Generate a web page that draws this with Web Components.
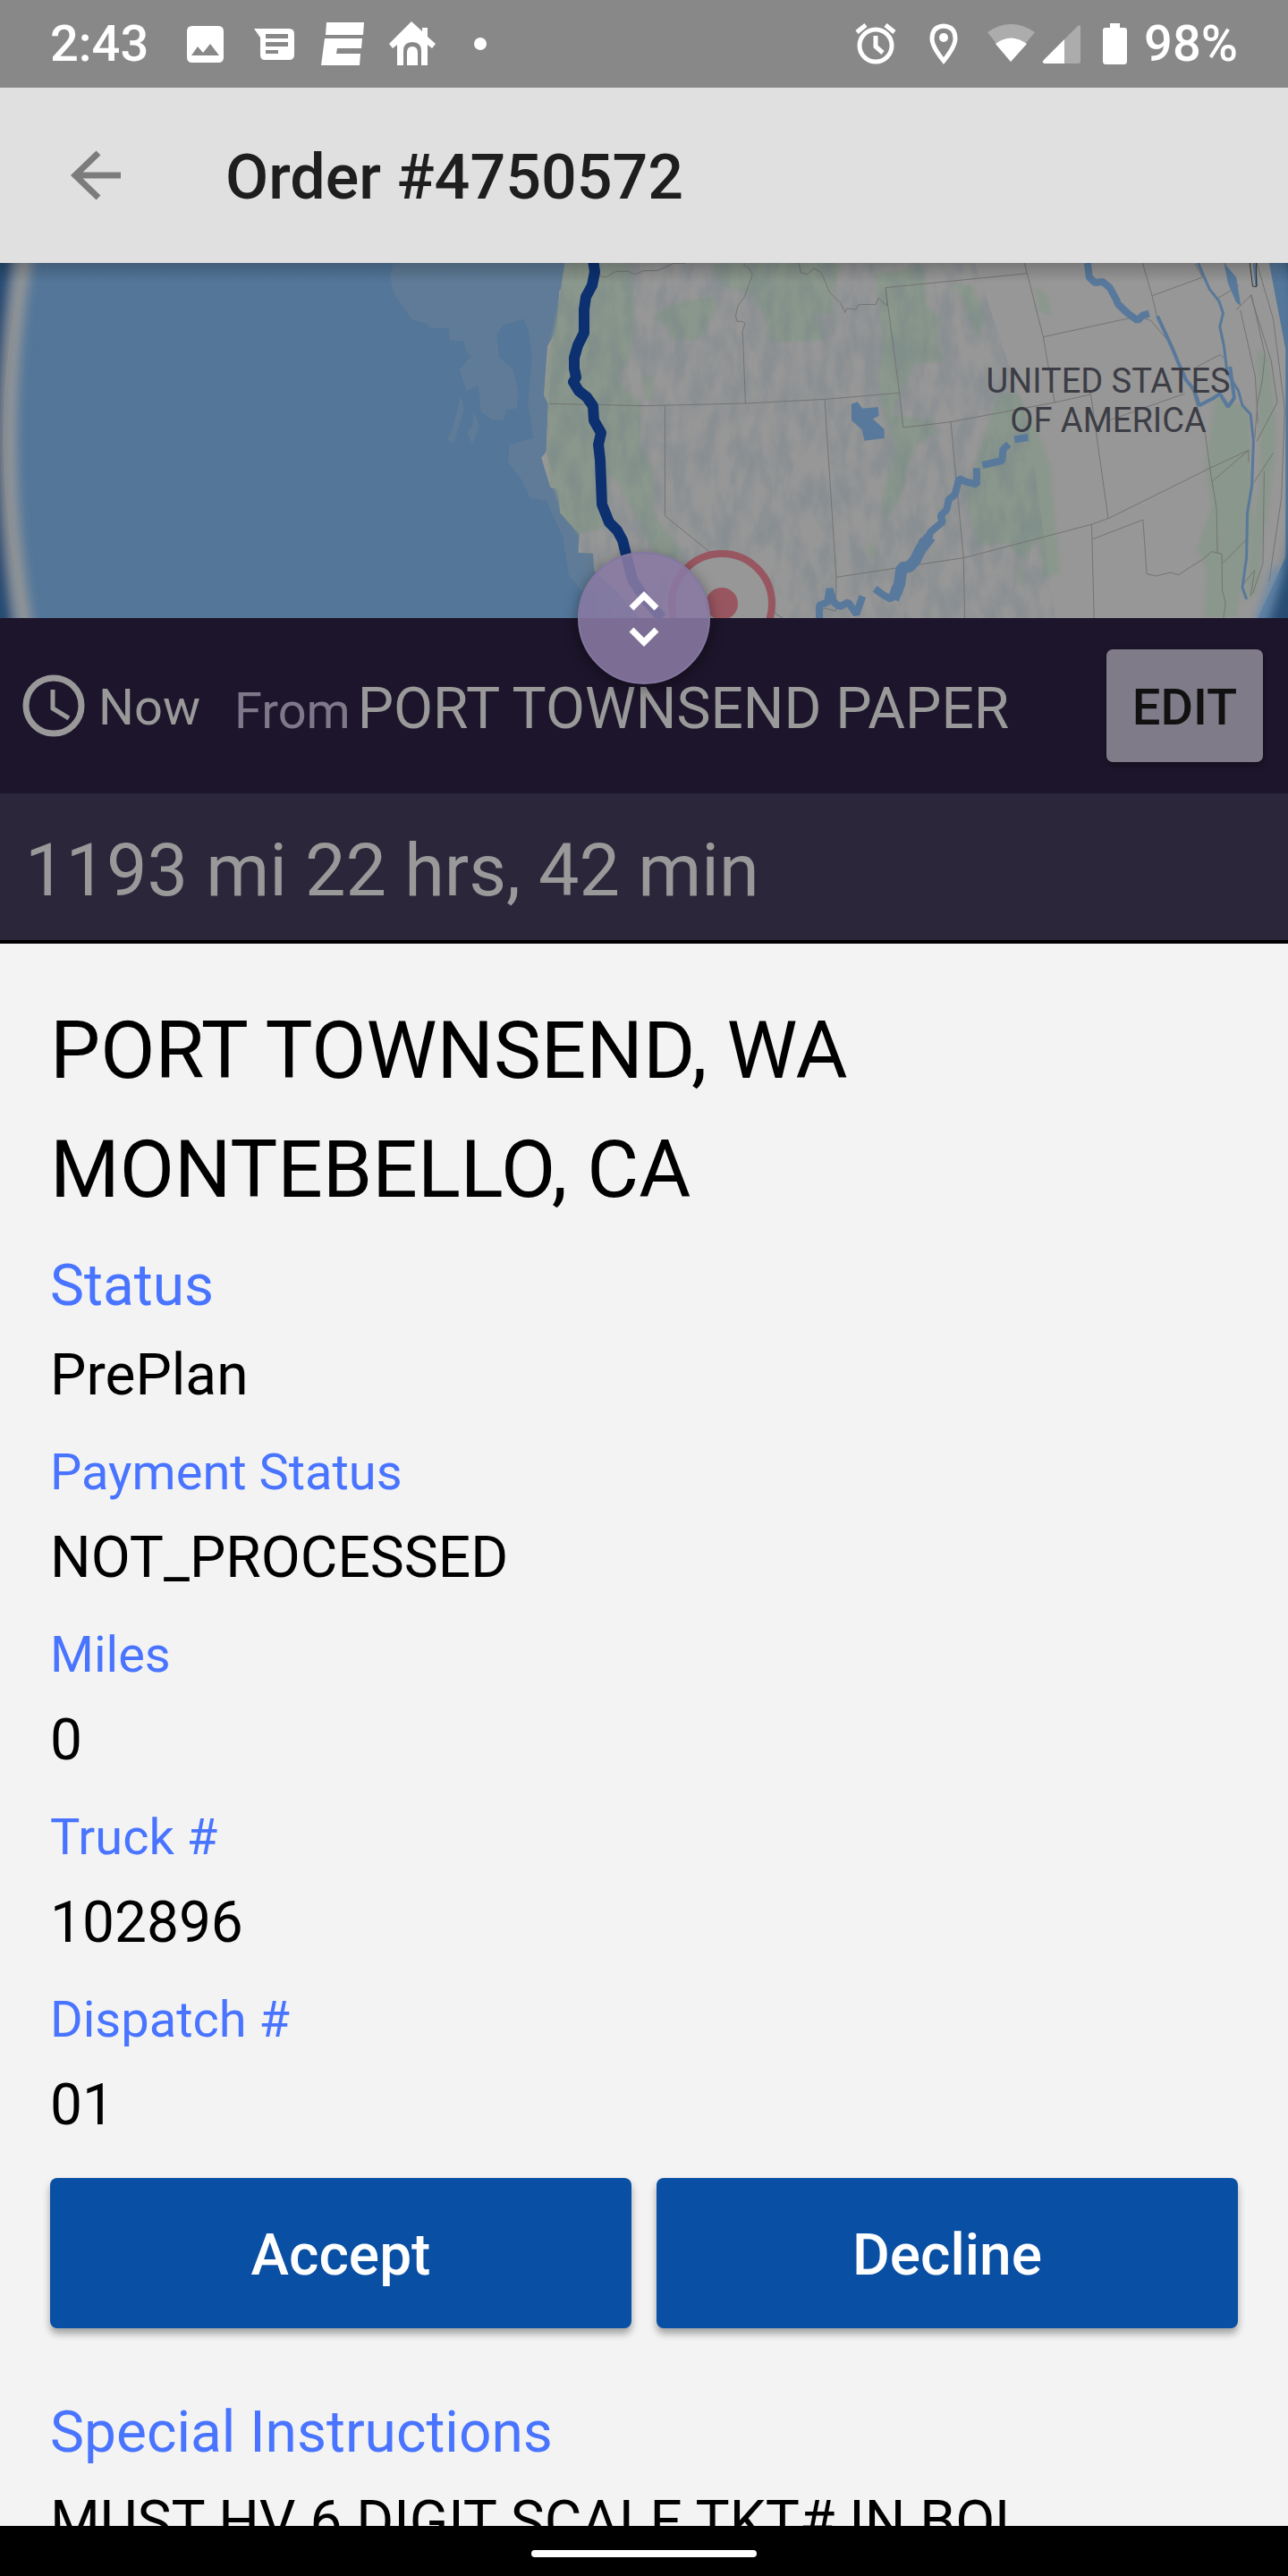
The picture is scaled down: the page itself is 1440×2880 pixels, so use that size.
<!DOCTYPE html>
<html lang="en">
<head>
<meta charset="utf-8">
<title>Order #4750572</title>
<style>
html, body { margin: 0; height: 100%; }
body { font-family: Roboto, "Liberation Sans", sans-serif; background: #f3f3f3; }
</style>
</head>
<body>
<order-screen></order-screen>
<script>
function define(name, html) {
  const t = document.createElement('template');
  t.innerHTML = html;
  customElements.define(name, class extends HTMLElement {
    constructor() {
      super();
      this.attachShadow({ mode: 'open' }).appendChild(t.content.cloneNode(true));
    }
  });
}

define('status-bar', `
<style>
:host { display: flex; align-items: center; justify-content: space-between; height: 98px; padding: 0 56px; background: #888; color: #fff; font-size: 56px; line-height: 64px; font-weight: 500; flex: none; box-sizing: border-box; }
svg { display: block; height: 98px; flex: none; }
.side { display: flex; align-items: center; }
.left { gap: 39px; }
.right { gap: 18px; }
</style>
<div class="side left">
  <span>2:43</span>
  <svg width="340" viewBox="205 0 340 98" fill="#fff">
    <path fill-rule="evenodd" d="M215 29h29q6 0 6 6v29q0 6-6 6h-29q-6 0-6-6V35q0-6 6-6zM214 62h31l-10-13-8 10-6-7z"/>
    <path fill-rule="evenodd" d="M284 32h39q6 0 6 6v23q0 6-6 6h-27q-5 0-5-6V42zM297 38v5h25v-5zM297 47v5h25v-5zM297 56v4h14v-4z"/>
    <path d="M365 25h42l-1 14h-42zM363 43h42l-1 11h-27l-1 6h27l-1 13h-43z"/>
    <path fill-rule="evenodd" d="M460 24l12 11v-4h6v10l9 8-4 5-5-4v23h-7V57q0-10-10-10t-10 10v16h-7V50l-5 4-4-5zM455 73V59q0-7 6-7t6 7v14z"/>
    <circle cx="537" cy="49" r="7"/>
  </svg>
</div>
<div class="side right">
  <svg width="305" viewBox="955 0 305 98" fill="#fff">
    <g fill="none" stroke="#fff" stroke-width="5">
      <circle cx="978" cy="51" r="18"/><path d="M978 40v12l8 7M957 36l10-8M999 36l-10-8"/>
      <path d="M1054 29q-13 1-13 14 0 9 13 25 13-16 13-25 0-13-13-14z"/>
    </g>
    <circle cx="1054" cy="42" r="5"/>
    <path fill-opacity=".3" d="M1103 36q26-18 53 0l-27 33z"/>
    <path d="M1112 49q17-13 35 0l-18 20z"/>
    <path fill-opacity=".3" d="M1189 44l15-15q3-2 3 1v39q0 2-2 2h-16z"/>
    <path d="M1189 44v27h-22q-4-1-1-4z"/>
    <path d="M1240 26h11v5h5q3 0 3 3v34q0 4-3 4h-21q-3 0-3-4V34q0-3 3-3h5z"/>
  </svg>
  <span>98%</span>
</div>`);

define('app-bar', `
<style>
:host { display: flex; align-items: center; gap: 112px; height: 196px; padding: 0 70px; background: #e0e0e0; flex: none; box-sizing: border-box; }
button { display: block; border: 0; padding: 0; background: none; width: 70px; height: 70px; }
svg { display: block; }
h1 { margin: 0; padding-top: 4px; font-size: 70px; line-height: 84px; font-weight: 500; color: #1e1e1e; }
</style>
<button aria-label="Back"><svg width="70" height="70" viewBox="0 0 70 70" fill="none" stroke="#7c7c7c" stroke-width="7"><path d="M65 35H14M40 10L14 35l26 25"/></svg></button>
<h1><slot></slot></h1>`);

define('route-map', `
<style>
:host { display: block; position: relative; height: 397px; flex: none; overflow: hidden; background: #537699; }
svg { display: block; width: 100%; height: 397px; }
:host::after { content: ""; position: absolute; inset: 0 0 auto; height: 22px; background: linear-gradient(#0003, #0000); }
.c path { vector-effect: non-scaling-stroke; }
.country { font-family: Roboto, "Open Sans", sans-serif; font-size: 38px; fill: #3c3d45; text-anchor: middle; }
</style>
<svg viewBox="0 0 1440 397" preserveAspectRatio="xMidYMid slice" role="img" aria-label="Route map">
  <defs>
    <filter id="b" x="-30%" y="-30%" width="160%" height="160%"><feGaussianBlur stdDeviation="6"/></filter>
    <filter id="s" color-interpolation-filters="sRGB" x="-30%" y="-30%" width="160%" height="160%"><feGaussianBlur stdDeviation="5"/></filter>
    <filter id="relief" color-interpolation-filters="sRGB" x="0" y="0" width="100%" height="100%"><feTurbulence type="fractalNoise" baseFrequency=".06 .025" numOctaves="3" seed="5"/><feColorMatrix values="0 0 0 0 .44  0 0 0 0 .5  0 0 0 0 .54  2.4 0 0 0 -.8"/></filter>
    <clipPath id="relief-clip"><path d="M632 0H1090L1150 180 1180 400H668L662 360 646 310 628 270 612 215 614 150 620 70z"/></clipPath>
  </defs>
  <g class="c" transform="scale(.459184 .333333) translate(0 -12)">
    <g fill="#5f7b97">
      <path d="M957 12L950 60 958 110 975 150 1005 205 1040 215 1045 230 1092 232 1095 272 1130 275 1135 310 1147 325 1118 370 1135 440 1165 425 1170 510 1200 540 1225 540 1232 505 1258 500 1262 440 1250 370 1215 325 1210 250 1225 220 1275 200 1287 240 1295 330 1285 480 1298 600 1240 620 1237 680 1270 740 1290 800 1330 810 1370 930 1385 1060 1415 1110H1568V12z"/>
      <path d="M1122 455L1103 560 1088 605 1105 618 1130 500zM1152 510L1150 560 1137 580 1150 622 1168 560z"/>
    </g>
    <path fill="#979797" d="M1375 12L1372 95 1362 105 1355 240 1333 290 1324 455 1335 485 1330 645 1318 665 1340 765 1360 770 1364 850 1410 920 1408 984 1444 986 1447 1045 1500 1110 1560 1210H3060L3130 1000V300L3090 12z"/>
    <path fill="#8b978d" d="M1375 12H1420V900L1410 920 1364 850 1360 770 1340 765 1330 645 1335 485 1324 455 1340 290 1355 240 1365 105z"/>
    <g fill="#8a978c" filter="url(#s)">
      <path d="M1385 12H1530L1545 160 1535 330 1500 400 1560 480 1560 620 1590 700 1590 850 1660 980 1640 1010 1600 1000 1500 740 1480 720 1475 900 1410 920 1370 850 1350 765 1337 600 1340 300 1370 100z"/>
      <path d="M1590 200L1620 160 1700 130 1745 125 1735 200 1700 270 1640 265 1620 220zM1730 12H2050L2025 120 2030 180 1990 190 2010 270 1880 280 1860 180 1820 110 1760 90z"/>
      <path d="M2130 50L2250 20 2255 150 2290 200 2280 280 2300 340 2230 350 2200 430 2170 520 2270 540 2280 580 2230 620 2190 800 2150 880 2150 780 2180 640 2140 450 2150 260z"/>
      <path d="M2320 80L2370 90 2400 200 2380 260 2340 130zM2520 90L2550 120 2560 190 2530 170zM2430 450L2480 450 2530 590 2560 700 2570 900 2580 1050 2540 1070 2530 930 2490 1010 2450 950 2380 960 2350 790 2390 620z"/>
      <path d="M2960 460L3040 500 3050 900 3010 1200 2930 1200 2940 1050 2915 970 2950 830 2935 700z M3060 300L3090 330 3110 600 3080 900 3060 1120 3030 1150 3070 700z"/>
      <path d="M1570 380L1590 400V470H1570zM2115 940L2130 970 2125 1010 2110 980zM2480 1020L2500 1060 2480 1100z"/>
    </g>
  </g>
  <rect x="600" width="600" height="397" filter="url(#relief)" clip-path="url(#relief-clip)" opacity=".35"/>
  <g class="c" transform="scale(.459184 .333333) translate(0 -12)">
    <g fill="none" stroke="#747474" stroke-width="1">
      <path d="M1460 55L1475 60 1500 40H1530L1545 50 1568 38 1600 38 1640 13H1670"/>
      <path d="M1338 484L1568 491 1815 483 2010 469 2190 448M1815 483L1808 240 1814 215 1808 208H1795L1791 190 1797 155 1813 125 1832 50 1824 30 1812 20V12M1619 491V860L1740 995 1890 1190 1920 1215M2008 470L2036 1066 2350 1000 2660 888 2700 868 2946 700M2190 448L2156 95 2501 47 2494 12M2501 47L2540 260 2568 480 2656 453 2640 420M2315 545L2199 564 2190 448M2315 545L2470 505 2568 480M2315 545L2346 1000 2349 1215M2540 260L2750 197 2775 192 2802 205 2855 290 2880 390 2905 445 2935 590 2946 700 2951 745 2962 835 2964 985M2656 453L2698 867M2700 540L2885 450M2946 700L3040 640V680M2951 745L3040 640M2658 888L2664 1215M2661 938L2783 873 2792 1055 2815 1062 2850 1050 2870 1058 2900 1030 2930 1005 2950 980 2975 988 2976 1110 2984 1150 2978 1215M2036 1066L2035 1180 2010 1170 1995 1180"/>
      <path d="M1945 12L1950 45 1965 50 1982 30 2000 45 2020 110 2045 145 2058 178 2062 165 2085 167 2090 152 2133 151 2138 130 2160 155 2157 95M2782 12L2805 122 2928 60 2910 15M2805 122L2817 190M2965 130L3015 90 2980 12M3010 170L3047 118 3080 320 3073 410 3062 480 3055 600M3020 170L3056 390 3063 550M3045 120L3095 340 3110 480 3060 610M2914 360L2970 320 2980 330M3052 750L3100 650M3078 710L3075 1020 3050 1120M2976 1020L3034 940M3027 1090L3055 1042 3045 1130M3060 12L3100 200 3128 500 3120 800 3090 1080"/>
    </g>
    <g fill="none" stroke="#58799b" stroke-linejoin="bevel">
      <path stroke-width="8" d="M2648 12L2652 60 2666 78 2685 75 2702 95 2718 135 2722 150 2745 180 2770 205 2782 188 2798 182"/>
      <path stroke-width="8" d="M2503 597L2470 604M2456 620L2442 638 2440 675 2392 690M2378 700V755L2350 745 2335 735 2325 790 2310 805 2305 840 2290 860 2295 880 2265 915 2260 940 2245 945 2240 985 2228 990M2180 1100L2170 1140 2150 1125 2130 1105M2100 1130L2085 1190 2065 1150 2045 1165 2030 1150 2020 1105 2015 1150 1995 1160V1215"/>
      <path stroke-width="13" d="M2265 930L2240 975 2228 1010 2215 1030 2195 1035 2190 1090 2175 1140"/>
      <path stroke-width="4" d="M2818 190L2835 240 2855 300 2870 350 2888 405 2907 435 2920 490 2955 465 2970 450 2990 495 3005 465 2995 360"/>
      <path stroke-width="3" d="M2917 12L2945 100 2968 140 2978 180 2970 225 2980 290 2988 380 3015 440 3025 490 3045 520 3052 610 3048 760 3037 850 3035 1000 3025 1100 3035 1140M3053 12L3060 90"/>
      <path stroke-width="1" stroke="#333" d="M3043 12L3050 90 3059 92V12"/>
    </g>
    <path fill="#58799b" d="M2073 485L2088 478 2100 500 2138 495 2140 525 2125 535 2153 570V600L2105 608 2098 570 2073 540zM2980 12L3010 60 3021 155 3010 145 2990 80z"/>
  </g>
  <g fill="none" filter="url(#b)">
    <path stroke="#254b72" stroke-width="36" d="M2-50Q-36 190 2 450M1446-50Q1481 60 1470 190 1474 330 1420 450"/>
    <path stroke="#8f9499" stroke-width="18" d="M36-50Q-16 198 36 450"/>
  </g>
  <g fill="none">
    <path stroke="#979088" stroke-width="1" d="M28 0Q-20 198 30 397"/>
    <path stroke="#6688aa" stroke-width="8" d="M1428 340L1404 410" filter="url(#s)"/>
    <path stroke="#0c3070" stroke-width="12" stroke-linejoin="round" d="M663-4L665 10 662 25 655 38 653 52V78L646 92 642 106V118L644 128 641 133 647 143 656 150 663 160 664 176 672 190 669 203 671 220 673 270 681 290 690 299 696 310 701 330 707 354 720 374 740 397"/>
  </g>
  <circle cx="807" cy="381" r="56" fill="#979797" stroke="#985660" stroke-width="8"/>
  <circle cx="807" cy="381" r="18" fill="#985660"/>
  <text class="country" x="1239" y="145">UNITED STATES</text>
  <text class="country" x="1239" y="189">OF AMERICA</text>
</svg>`);

define('map-toggle', `
<style>
:host { display: block; position: absolute; left: 50%; top: 0; transform: translate(-50%, -50%); z-index: 2; }
button { display: block; width: 148px; height: 148px; padding: 0; border: 2px solid #8377a0; border-radius: 50%; background: rgba(137, 122, 163, .88); box-shadow: 0 4px 16px #0006; }
svg { display: block; margin: auto; }
</style>
<button aria-label="Resize map"><svg width="144" height="144" viewBox="0 0 144 144" fill="none" stroke="#fff" stroke-width="7"><path d="M58 61l14-14 14 14M58 85l14 14 14-14"/></svg></button>`);

define('trip-origin', `
<style>
:host { display: flex; position: relative; align-items: center; height: 196px; padding: 0 28px 0 24px; background: #1d152b; color: #999; flex: none; box-sizing: border-box; }
.clock { flex: none; margin-right: 14px; }
.when { font-size: 56px; line-height: 64px; margin-right: 38px; padding-top: 4px; }
.place { display: flex; align-items: baseline; gap: 8px; flex: 1; font-size: 64px; line-height: 76px; padding-top: 10px; white-space: nowrap; }
.from { font-size: 56px; color: #7e798a; }
button { border: 0; border-radius: 7px; padding: 4px 0 0; width: 175px; height: 126px; background: #807b89; color: #111; font: 500 56px/64px Roboto, "Liberation Sans", sans-serif; box-shadow: 0 3px 6px #0005; }
</style>
<svg class="clock" width="72" height="72" viewBox="0 0 72 72" fill="none" stroke="#999" stroke-width="7"><circle cx="36" cy="36" r="31"/><path stroke-width="5" d="M35 18v21l18 11"/></svg>
<span class="when">Now</span>
<span class="place"><span class="from">From</span><slot></slot></span>
<button>EDIT</button>
<map-toggle></map-toggle>`);

define('trip-summary', `
<style>
:host { display: block; padding: 40px 28px 30px; background: #2c263b; border-bottom: 4px solid #000; color: #999; font-size: 81px; line-height: 94px; flex: none; }
</style><slot></slot>`);

define('detail-field', `
<style>
:host { display: block; font-size: 64px; line-height: 76px; color: #000; white-space: nowrap; }
.label { color: #4974ff; font-size: 56px; line-height: 84px; margin-bottom: 16px; }
:host([large]) .label { font-size: 64px; line-height: 76px; margin-bottom: 24px; }
</style>
<div class="label"><slot name="label"></slot></div><div><slot></slot></div>`);

define('order-details', `
<style>
:host { display: flex; flex-direction: column; flex: 1; min-height: 0; overflow: hidden; padding: 53px 56px 0; background: #f3f3f3; }
h2 { margin: 0 0 26px; font-size: 89px; line-height: 133px; font-weight: 400; color: #000; }
.fields { display: flex; flex-direction: column; gap: 28px; }
.actions { display: flex; gap: 28px; margin: 43px 0 79px; }
button { flex: 1; height: 168px; border: 0; border-radius: 8px; padding: 6px 0 0; background: #094fa3; color: #fff; font: 500 64px/76px Roboto, "Liberation Sans", sans-serif; box-shadow: 0 6px 9px #0005; }
</style>
<h2>PORT TOWNSEND, WA<br>MONTEBELLO, CA</h2>
<div class="fields">
<detail-field large><span slot="label">Status</span>PrePlan</detail-field>
<detail-field><span slot="label">Payment Status</span>NOT_PROCESSED</detail-field>
<detail-field><span slot="label">Miles</span>0</detail-field>
<detail-field><span slot="label">Truck #</span>102896</detail-field>
<detail-field><span slot="label">Dispatch #</span>01</detail-field>
</div>
<div class="actions"><button>Accept</button><button>Decline</button></div>
<detail-field large><span slot="label">Special Instructions</span>MUST HV 6 DIGIT SCALE TKT# IN BOL</detail-field>`);

define('nav-bar', `
<style>
:host { display: flex; align-items: center; justify-content: center; height: 56px; background: #000; flex: none; position: relative; }
i { display: block; width: 252px; height: 8px; border-radius: 4px; background: #fff; margin-top: 6px; }
</style><i></i>`);

define('order-screen', `
<style>:host { display: flex; flex-direction: column; height: 100vh; overflow: hidden; }</style>
<status-bar></status-bar>
<app-bar>Order #4750572</app-bar>
<route-map></route-map>
<trip-origin>PORT TOWNSEND PAPER</trip-origin>
<trip-summary>1193 mi 22 hrs, 42 min</trip-summary>
<order-details></order-details>
<nav-bar></nav-bar>`);
</script>
</body>
</html>
